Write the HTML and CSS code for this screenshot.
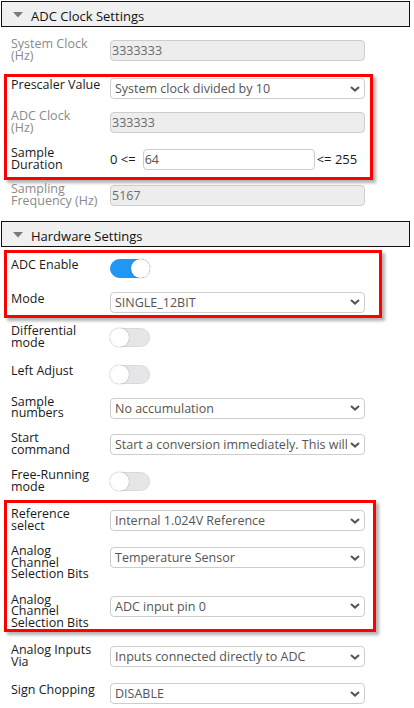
FILE: index.html
```html
<!DOCTYPE html>
<html>
<head>
<meta charset="utf-8">
<link rel="stylesheet" href="styles.css">
</head>
<body>
<div class="header">
  <svg class="caret" width="10" height="6" viewBox="0 0 10 6"><polygon points="0,0 10,0 5,5.5" fill="#7a7a7a"/></svg>
  <span>ADC Clock Settings</span>
</div>
<div class="section sec1">
  <div class="row">
    <div class="label ml dis">System Clock<br>(Hz)</div>
    <div class="input disabled">3333333</div>
  </div>
  <div class="group g1">
    <div class="row">
      <div class="label">Prescaler Value</div>
      <div class="select"><span class="val">System clock divided by 10</span><svg class="chev" width="10" height="6" viewBox="0 0 10 6"><path d="M1 1 L5 4.6 L9 1" fill="none" stroke="#555" stroke-width="2"/></svg></div>
    </div>
    <div class="row">
      <div class="label ml dis">ADC Clock<br>(Hz)</div>
      <div class="input disabled">333333</div>
    </div>
    <div class="row">
      <div class="label ml">Sample<br>Duration</div>
      <div class="range"><span>0 &lt;=</span><div class="input num">64</div><span class="max">&lt;= 255</span></div>
    </div>
  </div>
  <div class="row after-g1">
    <div class="label ml dis">Sampling<br>Frequency (Hz)</div>
    <div class="input disabled">5167</div>
  </div>
</div>
<div class="header">
  <svg class="caret" width="10" height="6" viewBox="0 0 10 6"><polygon points="0,0 10,0 5,5.5" fill="#7a7a7a"/></svg>
  <span>Hardware Settings</span>
</div>
<div class="section sec2">
  <div class="group g2">
    <div class="row">
      <div class="label">ADC Enable</div>
      <div class="tog-wrap"><div class="toggle on"><div class="knob"></div></div></div>
    </div>
    <div class="row">
      <div class="label">Mode</div>
      <div class="select"><span class="val">SINGLE_12BIT</span><svg class="chev" width="10" height="6" viewBox="0 0 10 6"><path d="M1 1 L5 4.6 L9 1" fill="none" stroke="#555" stroke-width="2"/></svg></div>
    </div>
  </div>
  <div class="row after-g2">
    <div class="label ml">Differential<br>mode</div>
    <div class="tog-wrap"><div class="toggle"><div class="knob"></div></div></div>
  </div>
  <div class="row">
    <div class="label">Left Adjust</div>
    <div class="tog-wrap"><div class="toggle"><div class="knob"></div></div></div>
  </div>
  <div class="row">
    <div class="label ml">Sample<br>numbers</div>
    <div class="select"><span class="val">No accumulation</span><svg class="chev" width="10" height="6" viewBox="0 0 10 6"><path d="M1 1 L5 4.6 L9 1" fill="none" stroke="#555" stroke-width="2"/></svg></div>
  </div>
  <div class="row">
    <div class="label ml">Start<br>command</div>
    <div class="select"><span class="val">Start a conversion immediately. This will be set back to 0 when conversion is done</span><svg class="chev" width="10" height="6" viewBox="0 0 10 6"><path d="M1 1 L5 4.6 L9 1" fill="none" stroke="#555" stroke-width="2"/></svg></div>
  </div>
  <div class="row">
    <div class="label ml">Free-Running<br>mode</div>
    <div class="tog-wrap"><div class="toggle"><div class="knob"></div></div></div>
  </div>
  <div class="group g3">
    <div class="row">
      <div class="label ml">Reference<br>select</div>
      <div class="select"><span class="val">Internal 1.024V Reference</span><svg class="chev" width="10" height="6" viewBox="0 0 10 6"><path d="M1 1 L5 4.6 L9 1" fill="none" stroke="#555" stroke-width="2"/></svg></div>
    </div>
    <div class="row">
      <div class="label ml">Analog<br>Channel<br>Selection Bits</div>
      <div class="select"><span class="val">Temperature Sensor</span><svg class="chev" width="10" height="6" viewBox="0 0 10 6"><path d="M1 1 L5 4.6 L9 1" fill="none" stroke="#555" stroke-width="2"/></svg></div>
    </div>
    <div class="row last">
      <div class="label ml">Analog<br>Channel<br>Selection Bits</div>
      <div class="select"><span class="val">ADC input pin 0</span><svg class="chev" width="10" height="6" viewBox="0 0 10 6"><path d="M1 1 L5 4.6 L9 1" fill="none" stroke="#555" stroke-width="2"/></svg></div>
    </div>
  </div>
  <div class="row after-g3">
    <div class="label ml">Analog Inputs<br>Via</div>
    <div class="select"><span class="val">Inputs connected directly to ADC</span><svg class="chev" width="10" height="6" viewBox="0 0 10 6"><path d="M1 1 L5 4.6 L9 1" fill="none" stroke="#555" stroke-width="2"/></svg></div>
  </div>
  <div class="row">
    <div class="label">Sign Chopping</div>
    <div class="select"><span class="val">DISABLE</span><svg class="chev" width="10" height="6" viewBox="0 0 10 6"><path d="M1 1 L5 4.6 L9 1" fill="none" stroke="#555" stroke-width="2"/></svg></div>
  </div>
</div>
</body>
</html>
```
FILE: styles.css
```css
* { box-sizing: border-box; }
body {
  margin: 0;
  font-family: "Open Sans", "Noto Sans", sans-serif;
  font-size: 12.5px;
  color: #1a1a1a;
  background: #fff;
}
.header {
  margin: 1px 0 0 1px;
  width: 409px;
  height: 26px;
  border: 1px solid #111;
  background: #f0f0f0;
  display: flex;
  align-items: center;
  padding: 4px 0 0 11px;
  gap: 8px;
  font-size: 13px;
  color: #111;
}
.caret { flex: none; margin-top: -3px; }
.sec1 { padding: 13px 0 10.5px; }
.sec2 { padding: 3px 0 0; }
.row {
  display: flex;
  align-items: flex-start;
  padding-left: 11px;
}
.row + .row { margin-top: 12.5px; }
.label {
  width: 99px;
  flex: none;
  line-height: 11.7px;
  padding-top: 1px;
  padding-right: 6px;
}
.label.ml { margin-top: -3px; padding-bottom: 3px; }
.label.dis { color: #8a8a8a; }
.input, .select {
  width: 255px;
  height: 21px;
  flex: none;
  border: 1px solid #cdcdcd;
  border-radius: 4px;
  line-height: 19px;
  white-space: nowrap;
  overflow: hidden;
}
.input { padding-left: 1px; color: #6a6a6a; background: #fff; }
.input.disabled { background: #ededed; }
.select {
  display: flex;
  align-items: center;
  padding: 0 4px 0 4px;
  color: #555;
  background: #fff;
}
.select .val { flex: 1; overflow: hidden; white-space: nowrap; min-width: 0; }
.chev { flex: none; margin-left: 3px; }
.range {
  width: 255px;
  display: flex;
  align-items: center;
  height: 21px;
  font-size: 13px;
  color: #1a1a1a;
}
.input.num { width: 172px; margin-left: 7px; color: #555; font-size: 12.5px; }
.max { margin-left: 2px; }
.tog-wrap { height: 21px; display: flex; align-items: center; }
.toggle {
  width: 40px;
  height: 19px;
  border-radius: 10px;
  background: #e6e6e8;
  border: 1px solid #dadada;
  position: relative;
}
.toggle .knob {
  position: absolute;
  top: -1px;
  left: -1px;
  width: 19px;
  height: 19px;
  border-radius: 50%;
  background: #fff;
  box-shadow: 0 0 1.5px rgba(0,0,0,0.35);
}
.toggle.on { background: #2196f3; border-color: #2196f3; }
.toggle.on .knob { left: auto; right: -1px; }
.group {
  margin-left: 4px;
  border: 3px solid #ff0000;
  box-shadow: 3px 3px 3px rgba(0,0,0,0.3);
}
.group .row { padding-left: 4px; }
.g1 { width: 369px; margin-top: 10px; padding: 1px 0 4px; }
.g2 { width: 378px; padding: 5px 0 2px; }
.g3 { width: 372px; margin-top: 4.4px; padding: 7px 0 0; }
.g3 .row.last { margin-bottom: -3px; }
.after-g1 { margin-top: 5px; }
.after-g2 { margin-top: 9.5px; }
.after-g3 { margin-top: 14.4px; }
```
